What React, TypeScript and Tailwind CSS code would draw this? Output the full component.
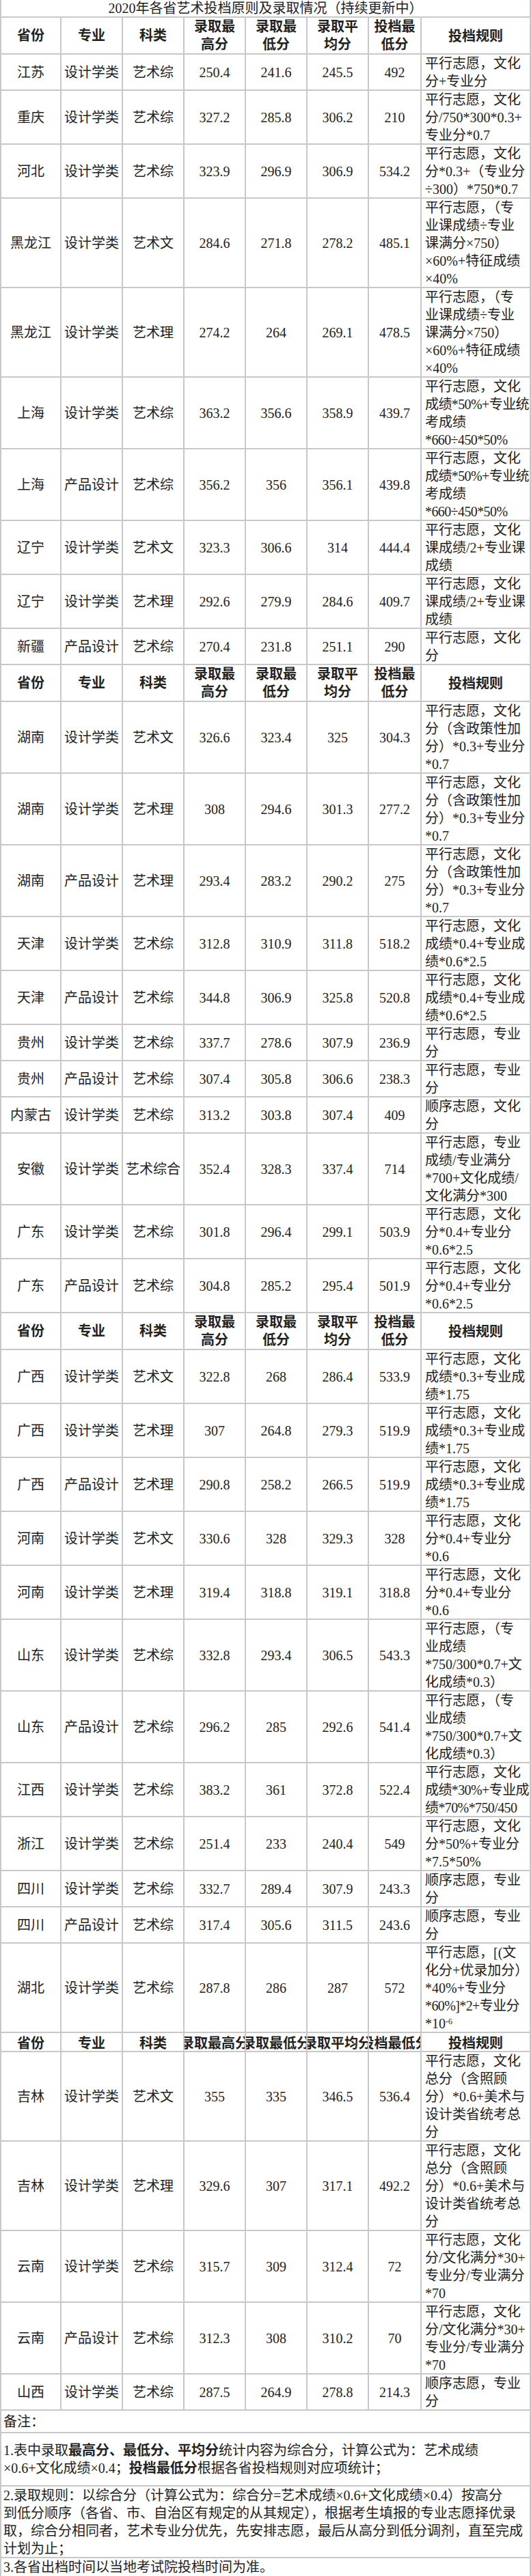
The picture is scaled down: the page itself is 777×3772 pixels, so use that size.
import React from "react";

type Row = {
  p: string;
  m: string;
  k: string;
  v: [string, string, string, string];
  r: React.ReactNode[];
};

const GRID =
  "grid grid-cols-[88px_90px_90px_90px_90px_90px_77px_158px] border-b-2 border-[#c8c8c8]";
const CELL =
  "flex items-center justify-center border-r-2 border-[#c8c8c8] whitespace-nowrap overflow-hidden";

const R_WH1 = ["平行志愿，文化", "分*0.4+专业分", "*0.6*2.5"];
const R_HLJ = ["平行志愿，（专", "业课成绩÷专业", "课满分×750）", "×60%+特征成绩", "×40%"];
const R_SH = ["平行志愿，文化", "成绩*50%+专业统", "考成绩", "*660÷450*50%"];
const R_LN = ["平行志愿，文化", "课成绩/2+专业课", "成绩"];
const R_HN = ["平行志愿，文化", "分（含政策性加", "分）*0.3+专业分", "*0.7"];
const R_TJ = ["平行志愿，文化", "成绩*0.4+专业成", "绩*0.6*2.5"];
const R_GZ = ["平行志愿，专业", "分"];
const R_GX = ["平行志愿，文化", "成绩*0.3+专业成", "绩*1.75"];
const R_HEN = ["平行志愿，文化", "分*0.4+专业分", "*0.6"];
const R_SD = ["平行志愿，（专", "业成绩", "*750/300*0.7+文", "化成绩*0.3）"];
const R_SC = ["顺序志愿，专业", "分"];
const R_JL = ["平行志愿，文化", "总分（含照顾", "分）*0.6+美术与", "设计类省统考总", "分"];
const R_YN = ["平行志愿，文化", "分/文化满分*30+", "专业分/专业满分", "*70"];

const G1: Row[] = [
  { p: "江苏", m: "设计学类", k: "艺术综", v: ["250.4", "241.6", "245.5", "492"], r: ["平行志愿，文化", "分+专业分"] },
  { p: "重庆", m: "设计学类", k: "艺术综", v: ["327.2", "285.8", "306.2", "210"], r: ["平行志愿，文化", "分/750*300*0.3+", "专业分*0.7"] },
  { p: "河北", m: "设计学类", k: "艺术综", v: ["323.9", "296.9", "306.9", "534.2"], r: ["平行志愿，文化", "分*0.3+（专业分", "÷300）*750*0.7"] },
  { p: "黑龙江", m: "设计学类", k: "艺术文", v: ["284.6", "271.8", "278.2", "485.1"], r: R_HLJ },
  { p: "黑龙江", m: "设计学类", k: "艺术理", v: ["274.2", "264", "269.1", "478.5"], r: R_HLJ },
  { p: "上海", m: "设计学类", k: "艺术综", v: ["363.2", "356.6", "358.9", "439.7"], r: R_SH },
  { p: "上海", m: "产品设计", k: "艺术综", v: ["356.2", "356", "356.1", "439.8"], r: R_SH },
  { p: "辽宁", m: "设计学类", k: "艺术文", v: ["323.3", "306.6", "314", "444.4"], r: R_LN },
  { p: "辽宁", m: "设计学类", k: "艺术理", v: ["292.6", "279.9", "284.6", "409.7"], r: R_LN },
  { p: "新疆", m: "产品设计", k: "艺术综", v: ["270.4", "231.8", "251.1", "290"], r: ["平行志愿，文化", "分"] },
];

const G2: Row[] = [
  { p: "湖南", m: "设计学类", k: "艺术文", v: ["326.6", "323.4", "325", "304.3"], r: R_HN },
  { p: "湖南", m: "设计学类", k: "艺术理", v: ["308", "294.6", "301.3", "277.2"], r: R_HN },
  { p: "湖南", m: "产品设计", k: "艺术理", v: ["293.4", "283.2", "290.2", "275"], r: R_HN },
  { p: "天津", m: "设计学类", k: "艺术综", v: ["312.8", "310.9", "311.8", "518.2"], r: R_TJ },
  { p: "天津", m: "产品设计", k: "艺术综", v: ["344.8", "306.9", "325.8", "520.8"], r: R_TJ },
  { p: "贵州", m: "设计学类", k: "艺术综", v: ["337.7", "278.6", "307.9", "236.9"], r: R_GZ },
  { p: "贵州", m: "产品设计", k: "艺术综", v: ["307.4", "305.8", "306.6", "238.3"], r: R_GZ },
  { p: "内蒙古", m: "设计学类", k: "艺术综", v: ["313.2", "303.8", "307.4", "409"], r: ["顺序志愿，文化", "分"] },
  { p: "安徽", m: "设计学类", k: "艺术综合", v: ["352.4", "328.3", "337.4", "714"], r: ["平行志愿，专业", "成绩/专业满分", "*700+文化成绩/", "文化满分*300"] },
  { p: "广东", m: "设计学类", k: "艺术综", v: ["301.8", "296.4", "299.1", "503.9"], r: R_WH1 },
  { p: "广东", m: "产品设计", k: "艺术综", v: ["304.8", "285.2", "295.4", "501.9"], r: R_WH1 },
];

const G3: Row[] = [
  { p: "广西", m: "设计学类", k: "艺术文", v: ["322.8", "268", "286.4", "533.9"], r: R_GX },
  { p: "广西", m: "设计学类", k: "艺术理", v: ["307", "264.8", "279.3", "519.9"], r: R_GX },
  { p: "广西", m: "产品设计", k: "艺术理", v: ["290.8", "258.2", "266.5", "519.9"], r: R_GX },
  { p: "河南", m: "设计学类", k: "艺术文", v: ["330.6", "328", "329.3", "328"], r: R_HEN },
  { p: "河南", m: "设计学类", k: "艺术理", v: ["319.4", "318.8", "319.1", "318.8"], r: R_HEN },
  { p: "山东", m: "设计学类", k: "艺术综", v: ["332.8", "293.4", "306.5", "543.3"], r: R_SD },
  { p: "山东", m: "产品设计", k: "艺术综", v: ["296.2", "285", "292.6", "541.4"], r: R_SD },
  { p: "江西", m: "设计学类", k: "艺术综", v: ["383.2", "361", "372.8", "522.4"], r: ["平行志愿，文化", "成绩*30%+专业成", "绩*70%*750/450"] },
  { p: "浙江", m: "设计学类", k: "艺术综", v: ["251.4", "233", "240.4", "549"], r: ["平行志愿，文化", "分*50%+专业分", "*7.5*50%"] },
  { p: "四川", m: "设计学类", k: "艺术综", v: ["332.7", "289.4", "307.9", "243.3"], r: R_SC },
  { p: "四川", m: "产品设计", k: "艺术综", v: ["317.4", "305.6", "311.5", "243.6"], r: R_SC },
  {
    p: "湖北", m: "设计学类", k: "艺术综", v: ["287.8", "286", "287", "572"],
    r: [
      "平行志愿，[(文",
      "化分+优录加分）",
      "*40%+专业分",
      "*60%]*2+专业分",
      <>
        *10<sup className="text-[12px]">-6</sup>
      </>,
    ],
  },
];

const G4: Row[] = [
  { p: "吉林", m: "设计学类", k: "艺术文", v: ["355", "335", "346.5", "536.4"], r: R_JL },
  { p: "吉林", m: "设计学类", k: "艺术理", v: ["329.6", "307", "317.1", "492.2"], r: R_JL },
  { p: "云南", m: "设计学类", k: "艺术综", v: ["315.7", "309", "312.4", "72"], r: R_YN },
  { p: "云南", m: "产品设计", k: "艺术综", v: ["312.3", "308", "310.2", "70"], r: R_YN },
  { p: "山西", m: "设计学类", k: "艺术综", v: ["287.5", "264.9", "278.8", "214.3"], r: R_SC },
];

function lineClass(line: React.ReactNode) {
  if (typeof line === "string" && line.includes("%") && line.length >= 10) {
    return "h-[26px] leading-[26px] whitespace-nowrap tracking-[-0.6px]";
  }
  return "h-[26px] leading-[26px] whitespace-nowrap";
}

function DataRow({ row }: { row: Row }) {
  return (
    <div className={GRID}>
      <div className={CELL}>{row.p}</div>
      <div className={CELL}>{row.m}</div>
      <div className={CELL}>{row.k}</div>
      {row.v.map((x, i) => (
        <div key={i} className={CELL}>
          {x}
        </div>
      ))}
      <div className="flex flex-col justify-center -mb-px overflow-hidden pl-[5px]">
        {row.r.map((line, i) => (
          <div key={i} className={lineClass(line)}>
            {line}
          </div>
        ))}
      </div>
    </div>
  );
}

function HeaderRow() {
  const two = (a: string, b: string) => (
    <div className={CELL}>
      <div className="flex flex-col items-center">
        <div className="h-[26px] leading-[26px]">{a}</div>
        <div className="h-[26px] leading-[26px]">{b}</div>
      </div>
    </div>
  );
  return (
    <div className={`${GRID} font-bold`}>
      <div className={CELL}>省份</div>
      <div className={CELL}>专业</div>
      <div className={CELL}>科类</div>
      {two("录取最", "高分")}
      {two("录取最", "低分")}
      {two("录取平", "均分")}
      {two("投档最", "低分")}
      <div className="flex items-center justify-center -mb-px">投档规则</div>
    </div>
  );
}

function HeaderRowFlat() {
  return (
    <div className={`${GRID} font-bold h-[28px]`}>
      <div className={CELL}>省份</div>
      <div className={CELL}>专业</div>
      <div className={CELL}>科类</div>
      <div className={CELL}>
        <span className="shrink-0">录取最高分</span>
      </div>
      <div className={CELL}>
        <span className="shrink-0">录取最低分</span>
      </div>
      <div className={CELL}>
        <span className="shrink-0">录取平均分</span>
      </div>
      <div className={CELL}>
        <span className="shrink-0">投档最低分</span>
      </div>
      <div className="flex items-center justify-center">投档规则</div>
    </div>
  );
}

export default function App() {
  return (
    <div className="w-[777px] overflow-hidden bg-white">
      <div className="w-[777px] border-x-2 border-[#c8c8c8] bg-white text-[20px] text-[#222] font-['Liberation_Serif','Noto_Sans_CJK_SC',serif]">
        <div className="h-[26px] border-b-2 border-[#c8c8c8] flex items-center justify-center leading-[24px] whitespace-nowrap">
          2020年各省艺术投档原则及录取情况（持续更新中）
        </div>
        <HeaderRow />
        {G1.map((r, i) => (
          <DataRow key={"a" + i} row={r} />
        ))}
        <HeaderRow />
        {G2.map((r, i) => (
          <DataRow key={"b" + i} row={r} />
        ))}
        <HeaderRow />
        {G3.map((r, i) => (
          <DataRow key={"c" + i} row={r} />
        ))}
        <HeaderRowFlat />
        {G4.map((r, i) => (
          <DataRow key={"d" + i} row={r} />
        ))}
        <div className="h-[33px] border-b-2 border-[#c8c8c8] flex items-center pl-[3px]">备注：</div>
        <div className="h-[78px] border-b-2 border-[#c8c8c8] flex flex-col justify-center pl-[3px]">
          <div className="h-[26px] leading-[26px] whitespace-nowrap">
            1.表中录取<b>最高分、最低分、平均分</b>统计内容为综合分，计算公式为：艺术成绩
          </div>
          <div className="h-[26px] leading-[26px] whitespace-nowrap">
            ×0.6+文化成绩×0.4；<b>投档最低分</b>根据各省投档规则对应项统计；
          </div>
        </div>
        <div className="h-[105px] border-b-2 border-[#c8c8c8] flex flex-col justify-center pl-[3px] overflow-hidden">
          <div className="h-[26px] leading-[26px] whitespace-nowrap">
            2.录取规则：以综合分（计算公式为：综合分=艺术成绩×0.6+文化成绩×0.4）按高分
          </div>
          <div className="h-[26px] leading-[26px] whitespace-nowrap">
            到低分顺序（各省、市、自治区有规定的从其规定），根据考生填报的专业志愿择优录
          </div>
          <div className="h-[26px] leading-[26px] whitespace-nowrap">
            取，综合分相同者，艺术专业分优先，先安排志愿，最后从高分到低分调剂，直至完成
          </div>
          <div className="h-[26px] leading-[26px] whitespace-nowrap">计划为止；</div>
        </div>
        <div className="h-[28px] border-b-2 border-[#c8c8c8] flex items-center pl-[3px] whitespace-nowrap">
          3.各省出档时间以当地考试院投档时间为准。
        </div>
      </div>
    </div>
  );
}
